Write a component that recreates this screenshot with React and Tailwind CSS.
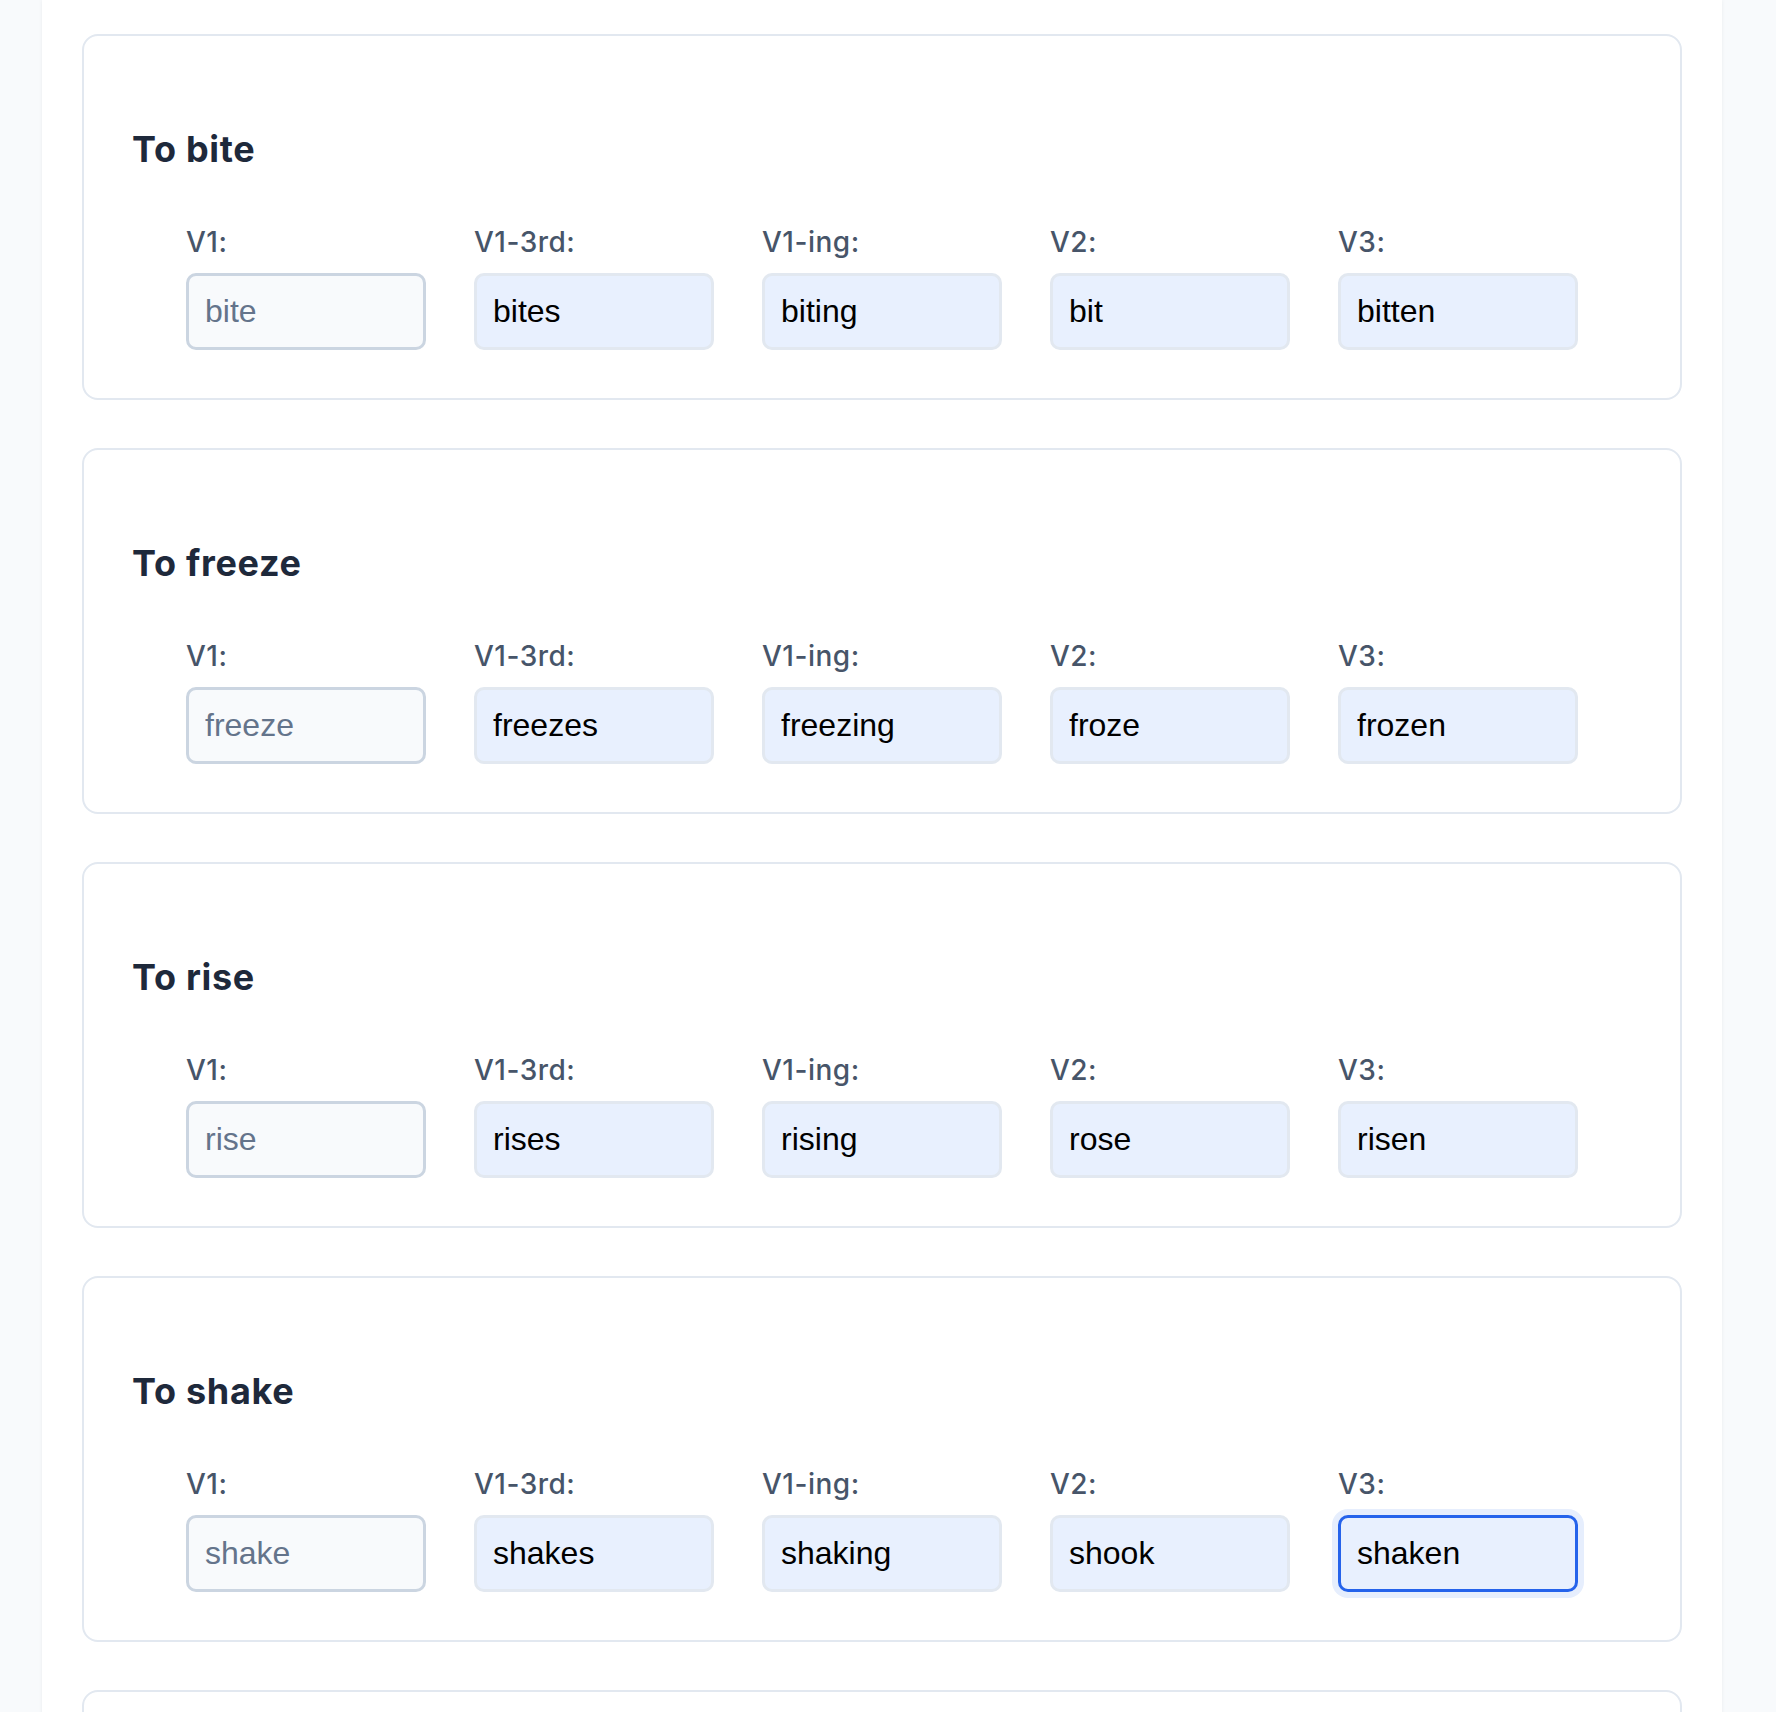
import { useState } from "react";

const verbs = [
  { name: "bite", forms: ["bite", "bites", "biting", "bit", "bitten"] },
  { name: "freeze", forms: ["freeze", "freezes", "freezing", "froze", "frozen"] },
  { name: "rise", forms: ["rise", "rises", "rising", "rose", "risen"] },
  { name: "shake", forms: ["shake", "shakes", "shaking", "shook", "shaken"] },
  { name: "sink", forms: ["sink", "sinks", "sinking", "sank", "sunk"] },
];

const labels = ["V1:", "V1-3rd:", "V1-ing:", "V2:", "V3:"];

const VerbCard = ({ verb, focusLast }) => {
  const [values, setValues] = useState(verb.forms);

  return (
    <div className="mb-[48px] rounded-[16px] border-2 border-[#e2e8f0] bg-white px-12 pt-[89px] pb-[48px]">
      <h2 className="h-[48px] text-[36px] leading-[48px] font-bold tracking-[0.7px] text-[#1e293b] font-['Inter',sans-serif]">
        To {verb.name}
      </h2>
      <div className="mt-[49px] flex justify-center gap-[48px]">
        {labels.map((label, i) => {
          const isFirst = i === 0;
          const isFocused = focusLast && i === labels.length - 1;
          return (
            <div key={label} className="w-[240px] flex flex-col">
              <label className="h-[40px] text-[28px] leading-[40px] font-medium tracking-[0.5px] text-[#475569] font-['Inter',sans-serif] mb-[11px]">
                {label}
              </label>
              <input
                type="text"
                value={values[i]}
                readOnly={isFirst}
                autoFocus={isFocused}
                onChange={(e) => {
                  const next = [...values];
                  next[i] = e.target.value;
                  setValues(next);
                }}
                className={
                  isFirst
                    ? "h-[77px] w-[240px] rounded-[10px] border-[3px] border-[#cbd5e1] bg-[#f8fafc] px-4 text-[32px] text-[#64748b] font-['Liberation_Sans',Arial,sans-serif] outline-none"
                    : isFocused
                      ? "h-[77px] w-[240px] rounded-[10px] border-[3px] border-[#2563eb] bg-[#e8f0fe] px-4 text-[32px] text-black font-['Liberation_Sans',Arial,sans-serif] outline-none ring-[6px] ring-[#e6eefd] caret-black"
                      : "h-[77px] w-[240px] rounded-[10px] border-[3px] border-[#e2e8f0] bg-[#e8f0fe] px-4 text-[32px] text-black font-['Liberation_Sans',Arial,sans-serif] outline-none"
                }
              />
            </div>
          );
        })}
      </div>
    </div>
  );
};

const App = () => {
  return (
    <div className="min-h-screen bg-[#f8fafc] overflow-hidden">
      <div className="ml-[42px] w-[1680px] min-h-screen bg-white shadow-[0_0_4px_rgba(15,23,42,0.06)] px-10 pt-[34px]">
        {verbs.map((verb) => (
          <VerbCard key={verb.name} verb={verb} focusLast={verb.name === "shake"} />
        ))}
      </div>
    </div>
  );
};

export default App;
